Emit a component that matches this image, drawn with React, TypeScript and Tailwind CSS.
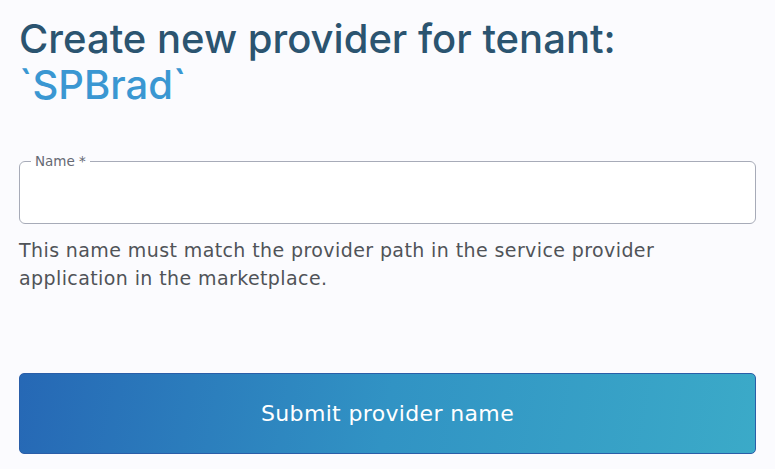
export default function App() {
  return (
    <div className="min-h-[469px] w-full bg-[#fbfbfe] px-[19px] pt-[16px] font-['DejaVu_Sans',sans-serif]">
      <h1 className="font-['Inter',sans-serif] text-[40px] leading-[46px] font-medium text-[#2b5470]">
        Create new provider for tenant:
        <br />
        <span className="text-[#3a97d2]">`SPBrad`</span>
      </h1>

      <fieldset className="mt-[46px] h-[70px] rounded-[6px] border border-[#a7abb8] bg-white px-[11px]">
        <legend className="px-[4px] text-[13.5px] leading-[14px] text-[#666a73]">Name *</legend>
        <input className="h-[40px] w-full bg-transparent outline-none" />
      </fieldset>

      <p className="mt-[12px] text-[19px] leading-[28px] tracking-[0.4px] text-[#505358]">
        This name must match the provider path in the service provider
        <br />
        application in the marketplace.
      </p>

      <button className="mt-[81px] flex h-[81px] w-full items-center justify-center rounded-[5px] border border-[#2a5ea8] bg-[linear-gradient(100deg,#2668b5_0%,#3193c4_50%,#3baac8_100%)] text-[22px] tracking-[0.35px] text-white">
        Submit provider name
      </button>
    </div>
  )
}
